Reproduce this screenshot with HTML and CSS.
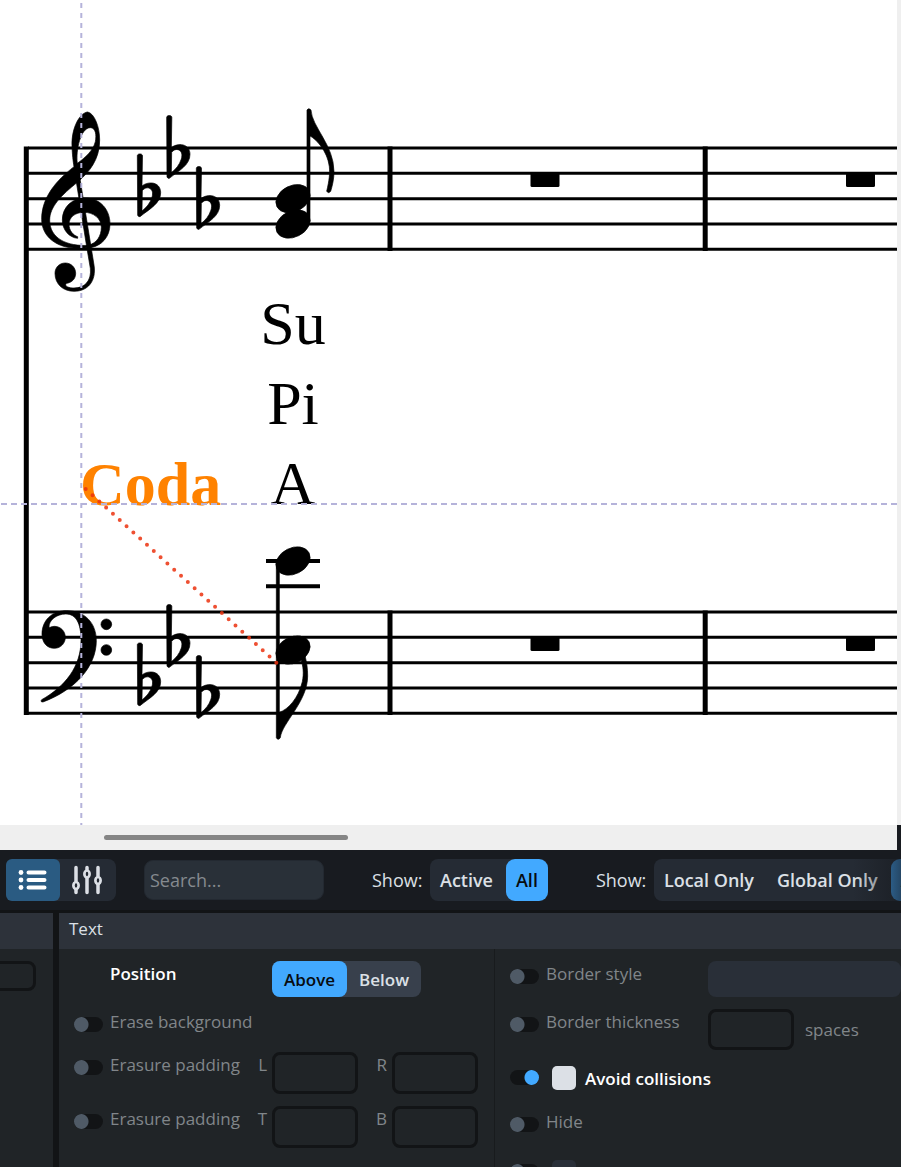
FILE: index.html
```html
<!DOCTYPE html>
<html lang="en">
<head>
<meta charset="utf-8">
<title>Score editor</title>
<link rel="stylesheet" href="styles.css">
</head>
<body>
<main class="viewport">
  <div class="score">
    <svg class="sheet" xmlns="http://www.w3.org/2000/svg" role="img" aria-label="Two-stave score in E flat major">
      <defs>
        <path id="flat" fill-rule="evenodd" d="M412 197C412 190 427.500 190 427.500 197L426 288C434 281 446 278 456 279C472 280 482 292 482 308C482 340 450 356 420 380Q415 381 413 376ZM427 302C432 295 440 292 446 294C457 297 460 308 456 322C450 340 440 352 426 363Z"/>
        <g id="signature">
          <use href="#flat"/>
          <use href="#flat" x="88" y="-115"/>
          <use href="#flat" x="177" y="38"/>
        </g>
        <g id="measures">
          <path class="staff-line" d="M28 148H4000M28 173.300H4000M28 198.700H4000M28 224H4000M28 249.300H4000"/>
          <path class="barline" d="M390 146.500V251M705.200 146.500V251"/>
          <rect x="530.500" y="173" width="29" height="14" rx="1.500"/>
          <rect x="846" y="173" width="29" height="14" rx="1.500"/>
        </g>
      </defs>
      <use href="#measures"/>
      <use href="#measures" y="464"/>
      <path class="barline" d="M26.300 146.500V715"/>

      <g class="glyph" transform="translate(0 90) scale(.33333)">
        <path fill-rule="evenodd" d="M263 66C240 68 214 112 216 168C217 195 219 212 222 230C168 272 125 322 125 388C125 440 170 475 234 475C250 475 260 474 270 472L268 466C200 470 149 445 149 390C149 350 185 315 232 277C267 247 299 210 299 150C299 110 283 70 263 66ZM232 220C227 180 242 113 271 113C287 113 290 135 286 155C279 183 255 203 232 220Z"/>
        <path d="M229 276L240 266L282 525C290 575 262 604 222 604C190 604 165 583 165 550C165 532 178 519 196 519C214 519 227 533 227 550C227 568 214 578 200 580C192 585 200 594 222 594C255 594 275 572 271 535L260 470Z"/>
        <path d="M233 445C208 443 187 420 187 390C187 350 218 324 255 324C300 324 330 358 330 402C330 440 305 470 266 474L266 465C290 460 304 438 304 412C304 385 280 367 252 367C225 367 207 382 207 403C207 422 220 436 233 440Z"/>
        <use href="#signature"/>
        <use href="#signature" y="1467"/>
      </g>

      <g class="glyph" transform="translate(0 590) scale(.33333)">
        <path d="M126 132C126 92 155 62 200 62C255 62 289 100 289 152C289 230 225 300 129 336Q120 336 125 329C195 290 243 230 243 150C243 100 228 72 198 72C168 72 146 92 147 112C150 114 154 109 163 109C182 109 196 124 196 142C196 160 182 175 163 175C140 175 126 157 126 132Z"/>
        <circle cx="319" cy="103" r="16"/>
        <circle cx="319" cy="180" r="16"/>
      </g>

      <g class="glyph" transform="translate(240 90) scale(.33333)">
        <ellipse cx="159" cy="326" rx="54" ry="39" transform="rotate(-27 159 326)"/>
        <ellipse cx="159" cy="402" rx="54" ry="39" transform="rotate(-27 159 402)"/>
        <path d="M201 60Q206 52 213 60C215 110 282 165 282 245C282 265 278 285 272 304Q266 312 260 304C268 270 270 250 268 230C262 180 225 145 210 138V395H201Z"/>
      </g>

      <g class="glyph" transform="translate(60 440) scale(.33333)">
        <path class="ledger" d="M618 363H780M618 439H780"/>
        <ellipse cx="699" cy="363" rx="54" ry="39" transform="rotate(-27 699 363)"/>
        <ellipse cx="699" cy="630" rx="54" ry="39" transform="rotate(-27 699 630)"/>
        <path d="M649 370V893Q654 903 661 893C665 850 743 785 743 708C743 685 740 665 735 648L722 655C730 680 732 700 727 725C715 775 685 808 658 817V370Z"/>
      </g>

      <g class="lyrics">
        <text x="293" y="344">Su</text>
        <text x="293" y="424">Pi</text>
        <text x="293" y="504">A</text>
      </g>
      <text class="coda" x="80" y="505">Coda</text>
      <path class="guide guide-v" d="M81.300 3V825"/>
      <path class="guide guide-h" d="M1 504H4000"/>
      <path class="attachment" d="M85.700 489L276.500 662.800"/>
    </svg>
  </div>
  <div class="scroll-track"><div class="scroll-thumb"></div></div>
</main>

<nav class="toolbar" aria-label="Properties toolbar">
  <div class="modes">
    <button class="icon-button selected" type="button" aria-label="Properties list">
      <svg class="icon" viewBox="0 0 30 30"><path class="thick" d="M10.500 7.500H26.500M10.500 15H26.500M10.500 22.500H26.500"/><g fill="currentColor"><circle cx="3" cy="7.500" r="2.400"/><circle cx="3" cy="15" r="2.400"/><circle cx="3" cy="22.500" r="2.400"/></g></svg>
    </button>
    <button class="icon-button" type="button" aria-label="Mixer sliders">
      <svg class="icon" viewBox="0 0 30 30"><path class="thin" d="M4 2.500V16M4 25V27.500M15 2.500V4.500M15 13.500V27.500M26 2.500V11M26 20V27.500"/><g class="ring"><ellipse cx="4" cy="20.500" rx="2.600" ry="3.500"/><ellipse cx="15" cy="9" rx="2.600" ry="3.500"/><ellipse cx="26" cy="15.500" rx="2.600" ry="3.500"/></g></svg>
    </button>
  </div>
  <input class="search" type="search" placeholder="Search..." aria-label="Search properties">
  <span class="show">Show:</span>
  <div class="group">
    <button class="choice" type="button">Active</button>
    <button class="choice chosen" type="button">All</button>
  </div>
  <span class="show">Show:</span>
  <div class="group">
    <button class="choice" type="button">Local Only</button>
    <button class="choice" type="button">Global Only</button>
    <button class="choice chosen" type="button">All</button>
  </div>
</nav>

<div class="panels">
  <section class="panel previous" aria-label="Previous property group">
    <div class="panel-title"></div>
    <div class="previous-body"><input class="small-field" type="text" aria-label="Value"></div>
  </section>
  <section class="panel text-panel">
    <h2 class="panel-title">Text</h2>
    <div class="columns">
      <div class="column">
        <div class="row">
          <span></span><span class="label on">Position</span>
          <div class="segments"><button class="segment chosen" type="button">Above</button><button class="segment" type="button">Below</button></div>
        </div>
        <div class="row compact"><input class="switch" type="checkbox" id="erase"><label class="label" for="erase">Erase background</label></div>
        <div class="row">
          <input class="switch" type="checkbox" id="pad-h">
          <div class="label-pair"><label class="label" for="pad-h">Erasure padding</label><label class="side" for="left">L</label></div>
          <div class="fields"><input class="field" id="left" type="text"><label class="side" for="right">R</label><input class="field" id="right" type="text"></div>
        </div>
        <div class="row">
          <input class="switch" type="checkbox" id="pad-v">
          <div class="label-pair"><label class="label" for="pad-v">Erasure padding</label><label class="side" for="top">T</label></div>
          <div class="fields"><input class="field" id="top" type="text"><label class="side" for="bottom">B</label><input class="field" id="bottom" type="text"></div>
        </div>
        <div class="row"><span></span><span class="label">Border</span></div>
      </div>
      <div class="column">
        <div class="row">
          <input class="switch" type="checkbox" id="style"><label class="label" for="style">Border style</label>
          <select class="select" aria-label="Border style"><option></option></select>
        </div>
        <div class="row">
          <input class="switch" type="checkbox" id="thick"><label class="label" for="thick">Border thickness</label>
          <div class="fields"><input class="field" type="text" aria-label="Border thickness in spaces"><span class="unit">spaces</span></div>
        </div>
        <div class="row">
          <input class="switch" type="checkbox" id="avoid-on" aria-label="Set avoid collisions" checked>
          <div class="check-line"><input class="tick on" type="checkbox" id="avoid"><label class="label on" for="avoid">Avoid collisions</label></div>
        </div>
        <div class="row"><input class="switch" type="checkbox" id="hide"><label class="label" for="hide">Hide</label></div>
        <div class="row">
          <input class="switch" type="checkbox" id="align-on" aria-label="Set alignment">
          <div class="check-line"><input class="tick" type="checkbox" id="align"><label class="label" for="align">Align wide</label></div>
        </div>
      </div>
    </div>
  </section>
</div>
</body>
</html>
```
FILE: styles.css
```css
* { box-sizing: border-box; }

body {
  margin: 0;
  height: 100vh;
  display: flex;
  flex-direction: column;
  overflow: hidden;
  background: #121416;
  color: #dce0e6;
  font-family: "Open Sans", "Noto Sans", sans-serif;
  font-size: 17px;
}

button, input, select { font: inherit; color: inherit; margin: 0; }
button { border: 0; padding: 0; background: none; }

/* Score */
.viewport { flex: none; background: #181b20; padding-right: 4px; }
.score { background: #fff; box-shadow: 4px 0 0 #efefef; overflow: hidden; }
.sheet { display: block; width: 100%; height: 825px; }
.staff-line { fill: none; stroke: #000; stroke-width: 3; }
.barline { fill: none; stroke: #000; stroke-width: 5; }
.glyph { stroke: #000; stroke-width: 2; }
.ledger { stroke-width: 12; }
.lyrics, .coda { font-family: "Liberation Serif", serif; font-size: 62px; }
.lyrics { text-anchor: middle; }
.coda { font-weight: 700; fill: #ff8200; }
.guide { fill: none; stroke: #b5b3da; stroke-width: 2; }
.guide-v { stroke-dasharray: 5 5; }
.guide-h { stroke-dasharray: 6 4; }
.attachment {
  fill: none;
  stroke: #eb3310;
  stroke-opacity: .86;
  stroke-width: 4;
  stroke-linecap: round;
  stroke-dasharray: 0 9.210;
}
.scroll-track { height: 25px; padding: 10px 104px; background: #efefef; }
.scroll-thumb { width: 244px; height: 5px; border-radius: 3px; background: #858585; }

/* Toolbar */
.toolbar {
  position: relative;
  flex: none;
  height: 63px;
  display: flex;
  align-items: center;
  padding: 0 6px;
  overflow: hidden;
  white-space: nowrap;
  background: #181b20;
  border-bottom: 3px solid #121416;
  font-size: 18px;
}
.toolbar::after {
  content: "";
  position: absolute;
  inset: 0 0 0 auto;
  width: 48px;
  background: linear-gradient(90deg, #181b2000, #181b20b0);
  pointer-events: none;
}
.group, .modes { flex: none; display: flex; height: 42px; border-radius: 8px; background: #252b34; }
.group { gap: 3px; }
.modes { padding-right: 2px; }
.icon-button { width: 54px; display: grid; place-items: center; border-radius: 6px; }
.icon-button.selected { background: #2a5b82; color: #fff; }
.icon { width: 30px; height: 30px; fill: none; stroke-linecap: round; }
.thick { stroke: currentColor; stroke-width: 4; }
.thin { stroke: currentColor; stroke-width: 3.500; }
.ring { stroke: currentColor; stroke-width: 2.700; }
.search {
  flex: none;
  width: 180px;
  height: 40px;
  margin-left: 28px;
  padding: 0 5px;
  border: 1px solid #232931;
  border-radius: 9px;
  background: #293038;
}
.search::placeholder { color: #858a8f; opacity: 1; }
.show { flex: none; width: 58px; margin-left: 48px; }
.choice { padding: 0 10px; border-radius: 9px; font-weight: 600; }
.chosen { background: #42a9ff; color: #080c10; }

/* Property panels */
.panels { flex: 1; min-height: 0; display: flex; gap: 6px; overflow: hidden; }
.panel { background: #202427; }
.panel-title {
  height: 36px;
  margin: 0;
  padding: 0 10px;
  background: #2d323a;
  font-size: 17px;
  font-weight: 400;
  line-height: 32px;
}
.previous { flex: none; width: 53px; }
.previous-body { display: flex; justify-content: flex-end; padding: 12px 17px; overflow: hidden; }
.small-field { flex: none; width: 86px; height: 30px; }
.text-panel { flex: 1; min-width: 0; }
.columns { display: grid; grid-template-columns: 436px 1fr; height: 100%; }
.column { display: flex; flex-direction: column; gap: 12px; padding: 12px 0 0 15px; }
.column:first-child { border-right: 1px solid #181b1d; }
.row {
  display: grid;
  grid-template-columns: 29px 159px 1fr;
  column-gap: 5px;
  align-items: start;
  min-height: 35px;
}
.compact { min-height: 31px; }
.label { padding-left: 2px; line-height: 26px; color: #81868a; white-space: nowrap; }
.label.on { color: #fff; font-weight: 600; }
.label-pair { display: flex; justify-content: space-between; }
.side { line-height: 26px; color: #81868a; }
.fields { display: flex; gap: 5px; }
.fields .side { width: 24px; text-align: right; }
.field, .small-field {
  border: 3px solid #121416;
  border-radius: 8px;
  background: #202427;
}
.field { width: 86px; height: 42px; }
.column:last-child .field { height: 41px; }
.unit { margin-left: 6px; line-height: 41px; color: #81868a; }
.segments { justify-self: start; display: flex; height: 36px; border-radius: 8px; background: #38404c; }
.segment { padding: 0 12px; border-radius: 8px; font-weight: 600; }
.select {
  appearance: none;
  height: 36px;
  border: 0;
  border-radius: 8px;
  background: #292f38;
}
.switch {
  appearance: none;
  width: 29px;
  height: 15px;
  margin-top: 8px;
  border-radius: 8px;
  background: radial-gradient(circle at 7px 50%, #4f5a66 7px, transparent 8px) #121416;
}
.switch:checked { background: radial-gradient(circle at 22px 50%, #42a9ff 7px, transparent 8px) #121416; }
.check-line { display: flex; gap: 7px; padding-left: 8px; }
.tick {
  appearance: none;
  flex: none;
  width: 24px;
  height: 24px;
  margin-top: 4px;
  border-radius: 5px;
  background: #292f38;
}
.tick.on { background: #dce0e6; }
.check-line .label { line-height: 34px; }
```
